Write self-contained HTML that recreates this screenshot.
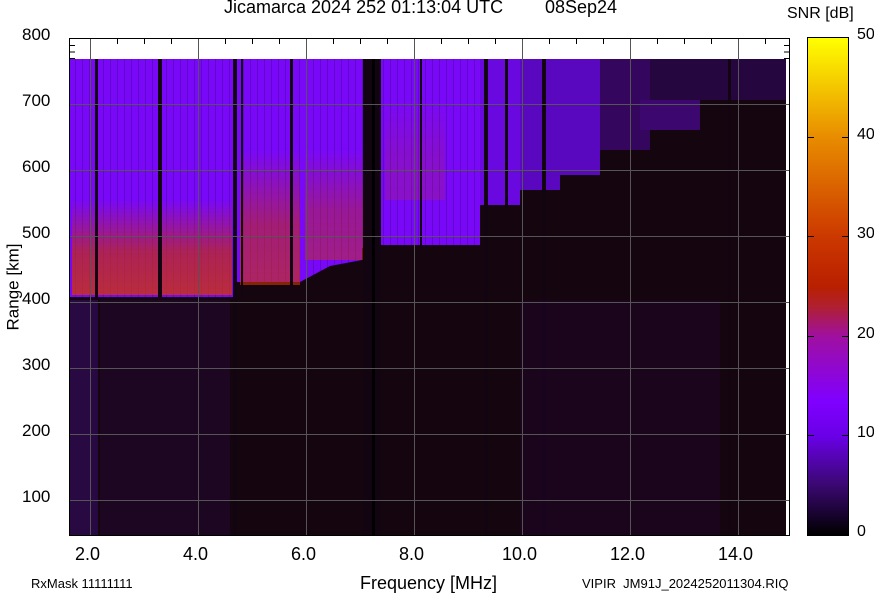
<!DOCTYPE html>
<html><head><style>
body{margin:0;width:874px;height:595px;background:#fff;overflow:hidden;font-family:"Liberation Sans",sans-serif;position:relative}
.t{position:absolute;font-size:18px;color:#000;white-space:nowrap}
.y{position:absolute;font-size:17px;color:#000;white-space:nowrap;left:22px}
.c{position:absolute;font-size:16px;color:#000;white-space:nowrap;left:857px}
.s{position:absolute;font-size:13px;color:#000;white-space:nowrap}
</style></head><body>
<div class="t" style="left:224px;top:-3px">Jicamarca 2024 252 01:13:04 UTC</div>
<div class="t" style="left:545px;top:-3px">08Sep24</div>
<div class="t" style="left:787px;top:5px;font-size:16px">SNR [dB]</div>
<svg width="874" height="595" style="position:absolute;left:0;top:0">
<defs>
<linearGradient id="cb" x1="0" y1="1" x2="0" y2="0">
<stop offset="0" stop-color="#000"/><stop offset="0.1" stop-color="#3a0870"/><stop offset="0.2" stop-color="#6a00e8"/>
<stop offset="0.27" stop-color="#8000ff"/><stop offset="0.4" stop-color="#a010a0"/><stop offset="0.46" stop-color="#b02030"/><stop offset="0.5" stop-color="#b82000"/><stop offset="0.6" stop-color="#cc3800"/>
<stop offset="0.8" stop-color="#e88c00"/><stop offset="1" stop-color="#ffff00"/></linearGradient>
<linearGradient id="red" x1="0" y1="0" x2="0" y2="1">
<stop offset="0" stop-color="#c83000" stop-opacity="0"/><stop offset="0.55" stop-color="#c83000" stop-opacity="0.65"/><stop offset="1" stop-color="#d03800" stop-opacity="0.75"/></linearGradient>
<pattern id="str" width="7" height="4" patternUnits="userSpaceOnUse"><rect width="7" height="4" fill="#7a08f8"/><rect x="5" width="1" height="4" fill="#6208c8"/></pattern>
</defs>
<rect x="69" y="38" width="721" height="497" fill="#fff"/>
<rect x="69" y="59" width="717" height="476" fill="#14050f"/>
<path d="M69 59H480V245H380V248H362V260L330 266L300 282H235V297H69Z" fill="url(#str)"/>
<path d="M480 59H520V205H480Z" fill="#6a08e0"/>
<path d="M520 59H600V175H560V190H520Z" fill="#5a08c0"/>
<path d="M600 59H650V150H600Z" fill="#34065e"/>
<path d="M650 59H786V100H650Z" fill="#26063e"/>
<path d="M640 100H700V130H640Z" fill="#3c0870"/>
<rect x="72" y="200" width="160" height="95" fill="url(#red)"/>
<rect x="240" y="150" width="60" height="135" fill="url(#red)" opacity="0.8"/>
<rect x="305" y="150" width="60" height="110" fill="url(#red)" opacity="0.6"/>
<rect x="385" y="100" width="60" height="100" fill="url(#red)" opacity="0.25"/>
<g fill="#120410">
<rect x="95" y="59" width="3" height="476"/><rect x="158" y="59" width="4" height="238"/>
<rect x="233" y="59" width="4" height="476"/><rect x="241" y="59" width="2" height="240"/>
<rect x="290" y="59" width="3" height="230"/><rect x="363" y="59" width="18" height="476"/>
<rect x="372" y="59" width="3" height="476" fill="#000"/><rect x="484" y="59" width="4" height="476"/>
<rect x="420" y="59" width="2" height="190"/><rect x="505" y="59" width="3" height="150"/>
<rect x="542" y="59" width="4" height="476"/><rect x="728" y="59" width="3" height="476"/>
</g>
<rect x="70" y="300" width="28" height="235" fill="#5010a0" opacity="0.35"/>
<rect x="100" y="300" width="130" height="235" fill="#3a0a70" opacity="0.2"/>
<rect x="520" y="300" width="200" height="235" fill="#3a0a70" opacity="0.15"/>
<g stroke="#555" stroke-width="1">
<path d="M90.5 38V535M198.5 38V535M306.5 38V535M414.5 38V535M522.5 38V535M630.5 38V535M738.5 38V535"/>
<path d="M69 104.5H790M69 170.5H790M69 236.5H790M69 302.5H790M69 368.5H790M69 434.5H790M69 500.5H790"/>
</g>
<rect x="69.5" y="38.5" width="720" height="497" fill="none" stroke="#000"/>
<g stroke="#000"><path d="M69 45.5h6M69 52h6M69 58.5h6M784 45.5h6M784 52h6M784 58.5h6"/>
<path d="M117.5 38v6M144.5 38v6M171.5 38v6M225.5 38v6M252.5 38v6M279.5 38v6M333.5 38v6M360.5 38v6M387.5 38v6M441.5 38v6M468.5 38v6M495.5 38v6M549.5 38v6M576.5 38v6M603.5 38v6M657.5 38v6M684.5 38v6M711.5 38v6M765.5 38v6"/></g>
<rect x="808" y="38" width="40" height="497" fill="url(#cb)"/>
<rect x="807.5" y="37.5" width="41" height="498" fill="none" stroke="#000"/>
<g stroke="#000"><path d="M808 137.5h6M842 137.5h6M808 236.5h6M842 236.5h6M808 336.5h6M842 336.5h6M808 435.5h6M842 435.5h6"/></g>
</svg>
<div class="y" style="top:25px">800</div>
<div class="y" style="top:91px">700</div>
<div class="y" style="top:157px">600</div>
<div class="y" style="top:223px">500</div>
<div class="y" style="top:289px">400</div>
<div class="y" style="top:355px">300</div>
<div class="y" style="top:421px">200</div>
<div class="y" style="top:487px">100</div>
<div class="t" style="left:-30px;top:277px;transform:rotate(-90deg);transform-origin:center;font-size:17px">Range [km]</div>
<div class="t" style="left:75px;top:544px">2.0</div>
<div class="t" style="left:183px;top:544px">4.0</div>
<div class="t" style="left:291px;top:544px">6.0</div>
<div class="t" style="left:399px;top:544px">8.0</div>
<div class="t" style="left:502px;top:544px">10.0</div>
<div class="t" style="left:610px;top:544px">12.0</div>
<div class="t" style="left:718px;top:544px">14.0</div>
<div class="t" style="left:360px;top:573px">Frequency [MHz]</div>
<div class="s" style="left:31px;top:576px">RxMask 11111111</div>
<div class="s" style="left:582px;top:576px">VIPIR&nbsp;&nbsp;JM91J_2024252011304.RIQ</div>
<div class="c" style="top:26px">50</div>
<div class="c" style="top:126px">40</div>
<div class="c" style="top:225px">30</div>
<div class="c" style="top:325px">20</div>
<div class="c" style="top:424px">10</div>
<div class="c" style="top:523px">0</div>
</body></html>
